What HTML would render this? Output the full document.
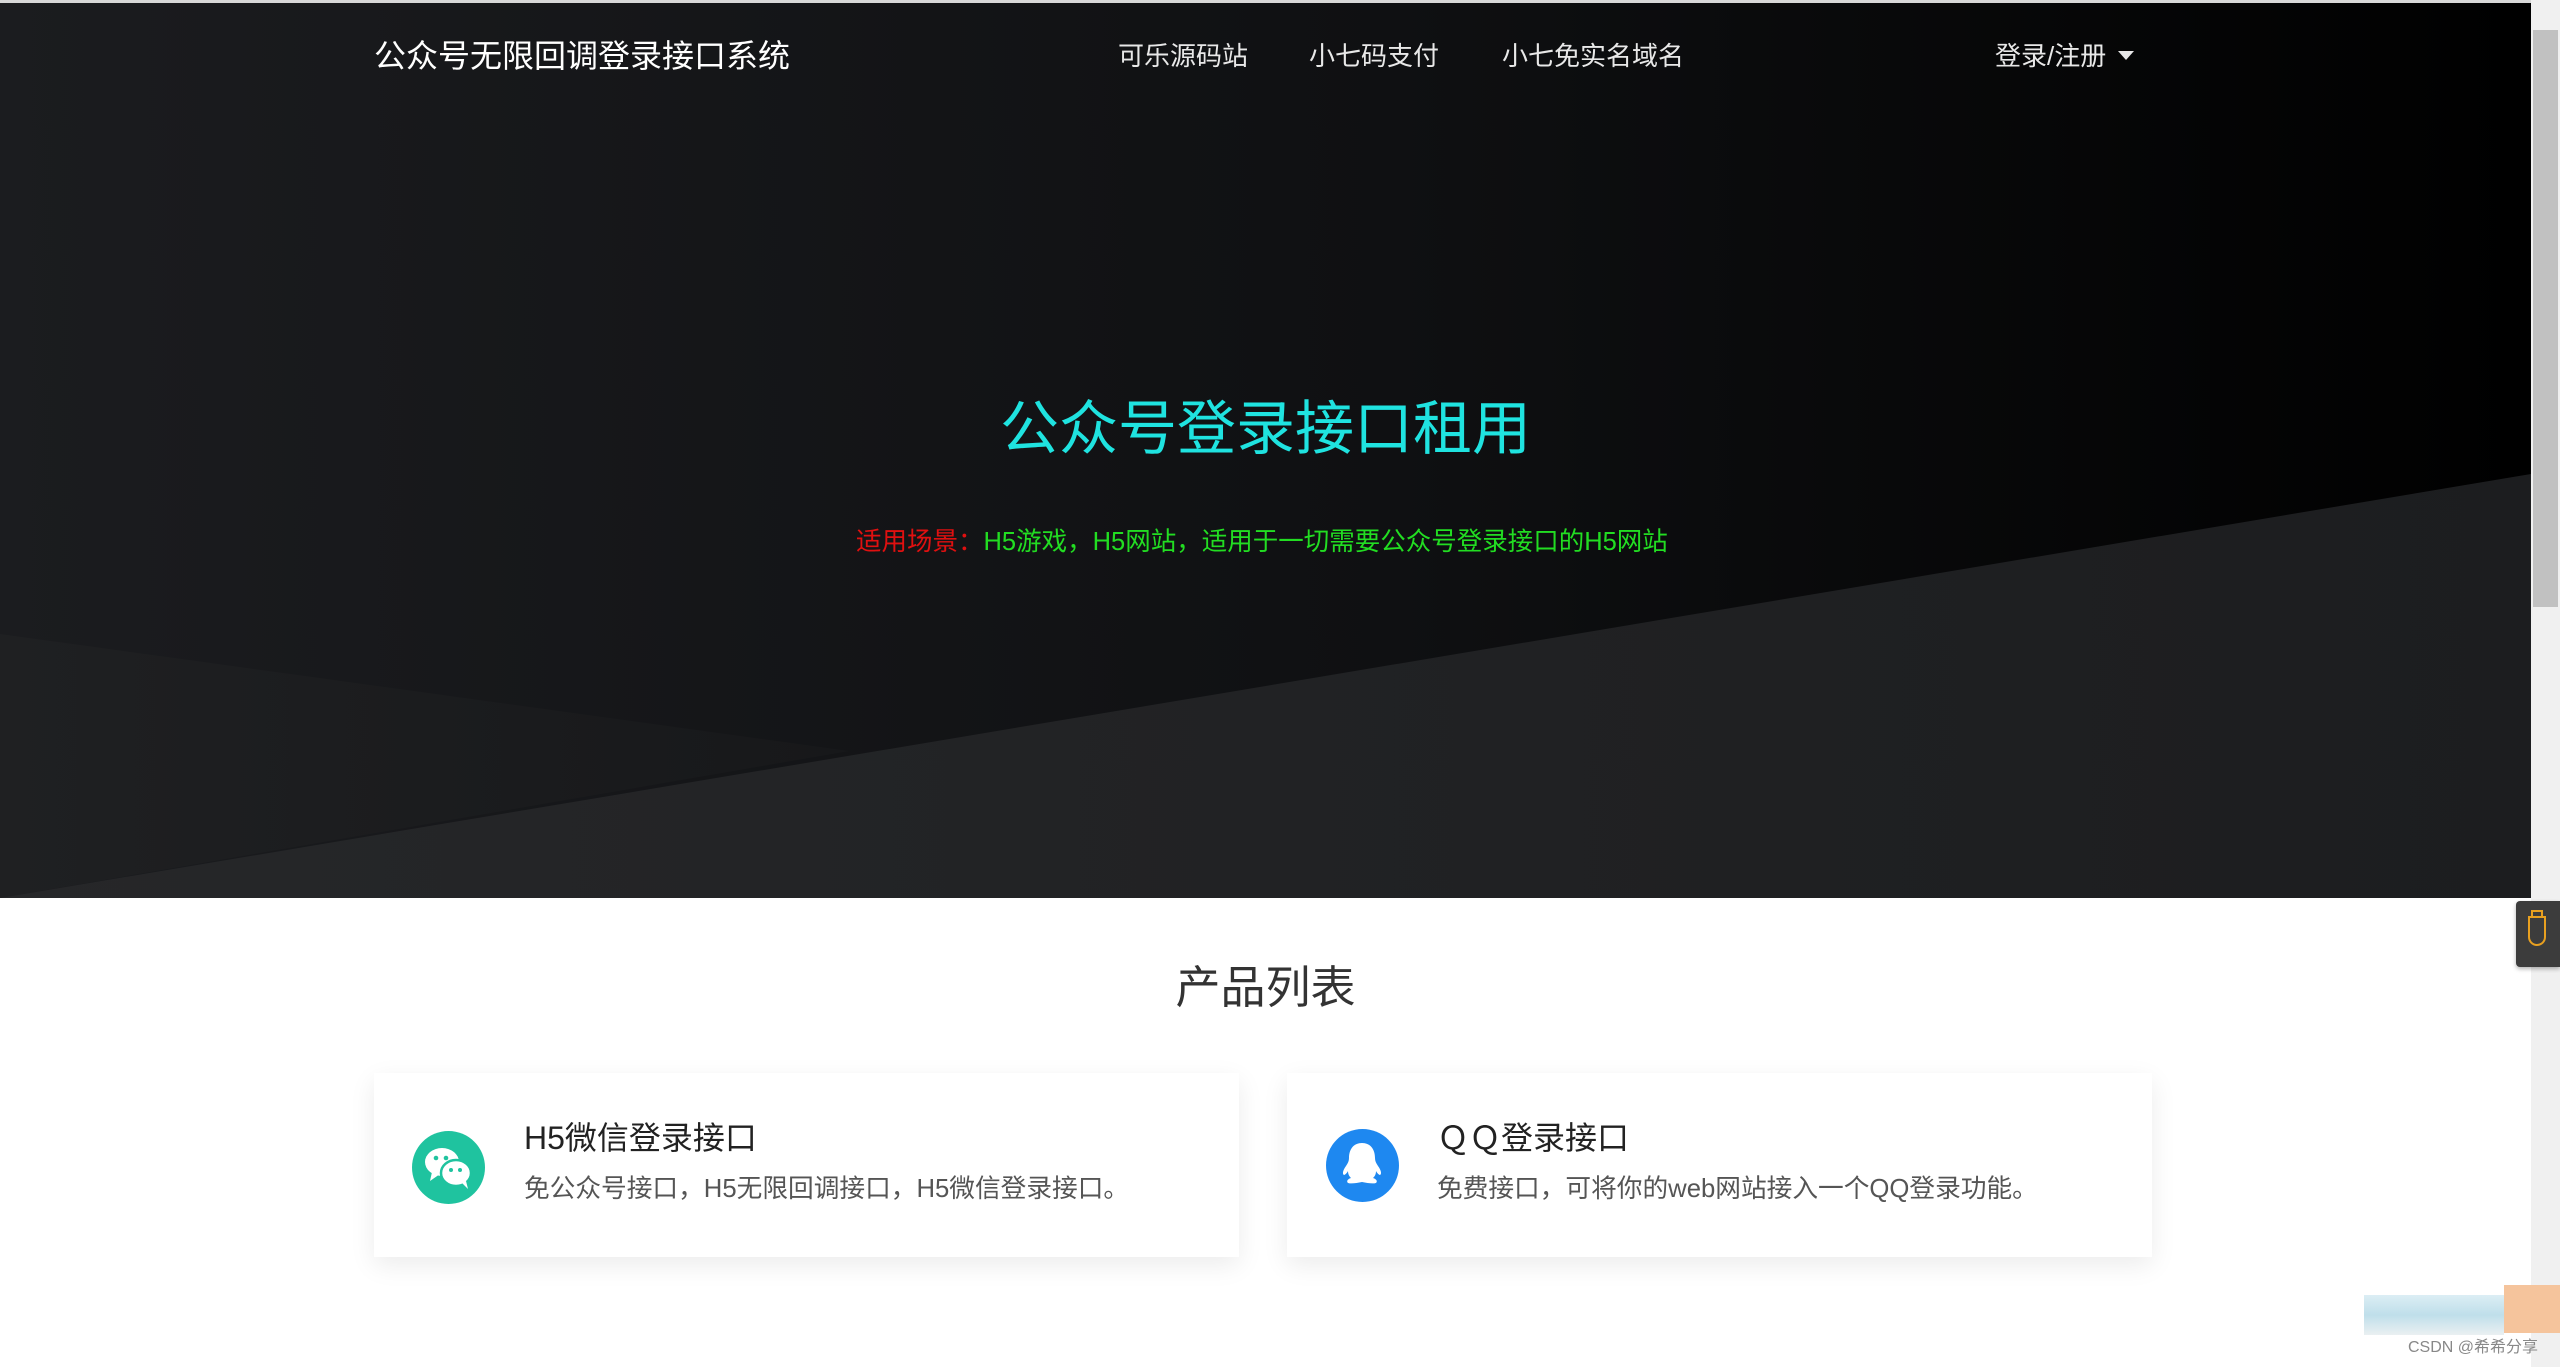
<!DOCTYPE html>
<html><head><meta charset="utf-8"><style>
*{margin:0;padding:0;box-sizing:border-box}
html,body{width:2560px;height:1367px;overflow:hidden;background:#fff;font-family:"Liberation Sans","Noto Sans CJK SC",sans-serif}
.hero{position:absolute;left:0;top:3px;width:2531px;height:895px;background:linear-gradient(90deg,#1b1c1f 0%,#0f1012 55%,#000 100%);overflow:hidden}
.topline{position:absolute;left:0;top:0;width:2560px;height:3px;background:#d8d8d8}
.t{position:absolute;white-space:nowrap;line-height:1}
.scroll{position:absolute;left:2531px;top:0;width:29px;height:1367px;background:#f0f0f0}
.thumb{position:absolute;left:2533px;top:30px;width:25px;height:577px;background:#c1c1c1}
.card{position:absolute;top:1073px;width:865px;height:184px;background:#fff;box-shadow:0 8px 24px rgba(0,0,0,0.08)}
</style></head><body>
<div class="topline"></div>
<div class="hero">
<svg width="2531" height="895" style="position:absolute;left:0;top:0">
<defs><linearGradient id="g1" x1="0" x2="1"><stop offset="0" stop-color="#1f2022"/><stop offset="1" stop-color="#17181a"/></linearGradient>
<linearGradient id="g2" x1="0" x2="1"><stop offset="0" stop-color="#262729"/><stop offset="1" stop-color="#1c1d1f"/></linearGradient></defs>
<polygon points="0,631 849,748 0,895" fill="url(#g1)"/>
<polygon points="0,895 2531,471 2531,895" fill="url(#g2)"/>
</svg>
</div>
<div class="t" style="left:374px;top:40px;font-size:32px;color:#fff">公众号无限回调登录接口系统</div>
<div class="t" style="left:1118px;top:43px;font-size:26px;color:#e8e8e8">可乐源码站</div>
<div class="t" style="left:1309px;top:43px;font-size:26px;color:#e8e8e8">小七码支付</div>
<div class="t" style="left:1502px;top:43px;font-size:26px;color:#e8e8e8">小七免实名域名</div>
<div class="t" style="left:1995px;top:43px;font-size:26px;color:#e8e8e8">登录/注册</div>
<div style="position:absolute;left:2118px;top:51px;border-left:8px solid transparent;border-right:8px solid transparent;border-top:9px solid #e8e8e8"></div>
<div class="t" style="left:0;width:2531px;text-align:center;top:400px;font-size:59px;color:#1fe3e0">公众号登录接口租用</div>
<div class="t" style="left:856px;top:530px;font-size:25.5px;color:#22dd22"><span style="color:#e01010">适用场景：</span>H5游戏，H5网站，适用于一切需要公众号登录接口的H5网站</div>
<div class="t" style="left:0;width:2531px;text-align:center;top:965px;font-size:45px;color:#333">产品列表</div>
<div class="card" style="left:374px">
<svg style="position:absolute;left:38px;top:58px" width="73" height="73" viewBox="0 0 73 73"><circle cx="36.5" cy="36.5" r="36.5" fill="#1fc39f"/>
<ellipse cx="30" cy="31" rx="17" ry="14" fill="#fff"/><polygon points="20,41 18,50 28,43" fill="#fff"/>
<ellipse cx="44" cy="42" rx="15" ry="13" fill="#fff" stroke="#1fc39f" stroke-width="2.5"/><polygon points="50,52 56,58 54,50" fill="#fff"/>
<circle cx="24" cy="27" r="2.3" fill="#1fc39f"/><circle cx="34" cy="27" r="2.3" fill="#1fc39f"/><circle cx="39" cy="39" r="2" fill="#1fc39f"/><circle cx="48" cy="39" r="2" fill="#1fc39f"/></svg>
<div class="t" style="left:150px;top:49px;font-size:32px;color:#222">H5微信登录接口</div>
<div class="t" style="left:150px;top:104px;font-size:25.7px;color:#555">免公众号接口，H5无限回调接口，H5微信登录接口。</div>
</div>
<div class="card" style="left:1287px">
<svg style="position:absolute;left:39px;top:56px" width="73" height="73" viewBox="0 0 73 73"><circle cx="36.5" cy="36.5" r="36.5" fill="#1e88f0"/>
<path d="M36 14c-9 0-13 7-13 15 0 3-1 5-3 8-3 4-4 8-2 9 1 0 3-2 4-4 0 3 1 5 3 7-3 1-5 3-3 5 3 1 9 0 14-1 5 1 11 2 14 1 2-2 0-4-3-5 2-2 3-4 3-7 1 2 3 4 4 4 2-1 1-5-2-9-2-3-3-5-3-8 0-8-4-15-13-15z" fill="#fff"/></svg>
<div class="t" style="left:150px;top:49px;font-size:32px;color:#222">ＱＱ登录接口</div>
<div class="t" style="left:150px;top:104px;font-size:25.7px;color:#555">免费接口，可将你的web网站接入一个QQ登录功能。</div>
</div>
<div class="scroll"></div><div class="thumb"></div>
<div style="position:absolute;left:2516px;top:901px;width:44px;height:66px;background:#3c3c3c;border-radius:4px 0 0 4px;box-shadow:0 2px 4px rgba(0,0,0,.3)">
<svg width="44" height="66" viewBox="0 0 44 66"><path d="M13 16h16v20a8 8 0 0 1-16 0z M16 16v-6h10v6" fill="none" stroke="#e8a020" stroke-width="2"/></svg></div>
<div style="position:absolute;left:2364px;top:1295px;width:140px;height:40px;background:linear-gradient(#d8ecf3,#b8dbe8,#e8eef0);opacity:.9"></div>
<div style="position:absolute;left:2504px;top:1285px;width:56px;height:48px;background:#f5c49c"></div>
<div class="t" style="left:2408px;top:1340px;font-size:16px;color:#888">CSDN @希希分享</div>
</body></html>
